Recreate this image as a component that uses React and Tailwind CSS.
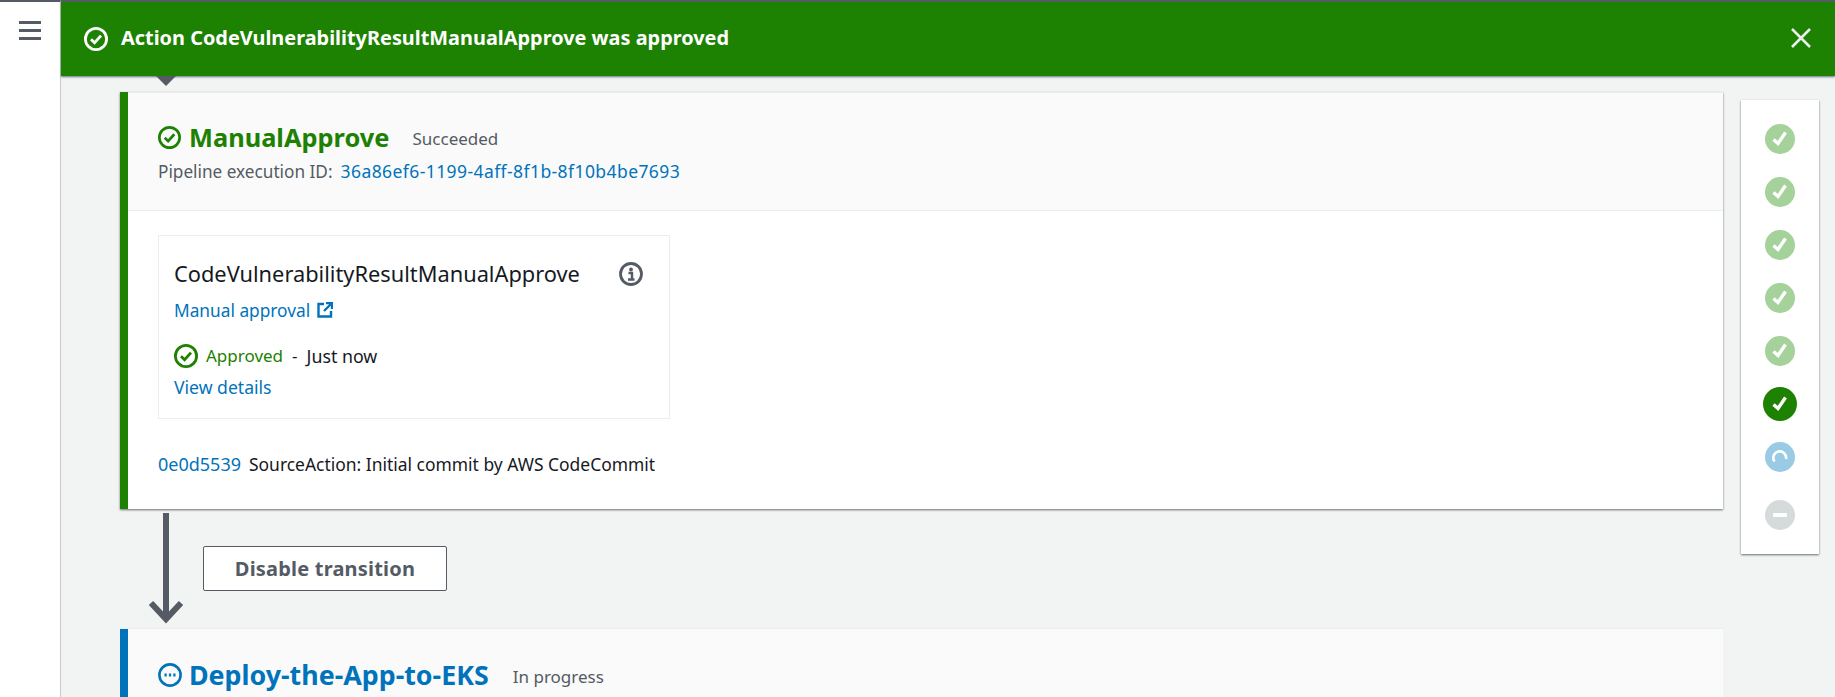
const CheckOutline = ({ size = 24, color = "#1d8102", sw = 2.8 }) => (
  <svg width={size} height={size} viewBox="0 0 24 24" fill="none" stroke={color} strokeWidth={sw} className="shrink-0">
    <circle cx="12" cy="12" r={12 - sw / 2} />
    <path d="M7 12.2l3.6 3.6 6.4-7.2" strokeWidth={sw} />
  </svg>
);

const Step = ({ bg, size = 30, children }) => (
  <div className="flex items-center justify-center rounded-full shrink-0" style={{ background: bg, width: size, height: size }}>
    {children}
  </div>
);

const Tick = () => (
  <svg width="18" height="18" viewBox="0 0 18 18" fill="none" stroke="white" strokeWidth="3.4">
    <path d="M2.5 9.5l4.5 4L14.5 2.5" />
  </svg>
);

const LightStep = () => (
  <Step bg="#a5d19a"><Tick /></Step>
);

export default function App() {
  return (
    <div className="flex h-[697px] w-full overflow-hidden bg-[#f2f3f3] text-[#16191f] font-['Noto_Sans',sans-serif] text-[17px] leading-[24px]">
      <aside className="w-[61px] shrink-0 bg-white border-r border-[#c6cccc] border-t-2 border-t-[#545b64] pt-[19px] pl-[19px]">
        <div className="flex flex-col gap-[5px] w-[22px]">
          <div className="h-[3px] bg-[#545b64]" />
          <div className="h-[3px] bg-[#545b64]" />
          <div className="h-[3px] bg-[#545b64]" />
        </div>
      </aside>
      <div className="flex-1 min-w-0 flex flex-col">
        <div className="h-[76px] shrink-0 bg-[#1d8102] border-t-2 border-t-[#545b64] shadow-[0_1px_2px_#687078] flex items-center pl-[23px] pr-[24px] text-white relative z-10">
          <CheckOutline size={24} color="white" />
          <span className="ml-[13px] text-[19.9px] font-bold relative top-[-1px]">Action CodeVulnerabilityResultManualApprove was approved</span>
          <svg width="20" height="20" viewBox="0 0 20 20" className="ml-auto relative top-[-1px]" stroke="#eaeded" strokeWidth="2.6">
            <path d="M1 1l18 18M19 1L1 19" />
          </svg>
          <div className="absolute left-[95px] top-[74px] w-0 h-0 border-l-[10px] border-r-[10px] border-t-[10px] border-l-transparent border-r-transparent border-t-[#545b64]" />
        </div>
        <div className="flex pt-[16px] pl-[59px] pr-[16px] gap-[18px] items-start">
          <div className="w-[1603px] shrink-0">
            <section className="bg-white border-l-[8px] border-[#1d8102] h-[417px] shadow-[0_1px_2px_#687078]">
              <header className="h-[119px] bg-[#fafafa] border-b border-t border-[#eaeded] pl-[30px] pt-[28px]">
                <div className="flex items-center h-[32px]">
                  <CheckOutline size={23} />
                  <h2 className="ml-[8px] text-[25.4px] font-bold text-[#1d8102]">ManualApprove</h2>
                  <span className="ml-[23px] text-[#545b64] relative top-[2px]">Succeeded</span>
                </div>
                <div className="mt-[6px] text-[#545b64] text-[17.2px]">
                  Pipeline execution ID:
                  <span className="ml-[8px] text-[#0073bb] text-[17.5px] tracking-[0.42px]">36a86ef6-1199-4aff-8f1b-8f10b4be7693</span>
                </div>
              </header>
              <div className="pl-[30px] pt-[24px]">
                <div className="w-[512px] h-[184px] border border-[#eaeded] pl-[15px] pr-[26px] pt-[24px]">
                  <div className="flex items-center justify-between h-[28px]">
                    <span className="text-[21.8px]">CodeVulnerabilityResultManualApprove</span>
                    <svg width="24" height="24" viewBox="0 0 24 24" fill="none">
                      <circle cx="12" cy="12" r="10.5" stroke="#545b64" strokeWidth="2.8" />
                      <circle cx="12" cy="7.5" r="1.9" fill="#545b64" />
                      <path d="M9.5 11h3.5v5.5M9 17.5h6.5" stroke="#545b64" strokeWidth="2.4" />
                    </svg>
                  </div>
                  <div className="flex items-center mt-[11px] text-[#0073bb] text-[17.3px]">
                    Manual approval
                    <svg width="16" height="16" viewBox="0 0 16 16" fill="none" stroke="#0073bb" strokeWidth="2.4" className="ml-[7px] relative top-[-1px]">
                      <path d="M7 2H1.5v12.5H14V9M9 1h6v6M15 1L7 9" />
                    </svg>
                  </div>
                  <div className="flex items-center mt-[21px] h-[24px]">
                    <CheckOutline size={24} />
                    <span className="ml-[8px] text-[#1d8102]">Approved</span>
                    <span className="ml-[9px]">-</span>
                    <span className="ml-[9px] text-[17.8px]">Just now</span>
                  </div>
                  <div className="mt-[7px] text-[#0073bb] text-[17.6px]">View details</div>
                </div>
                <div className="mt-[33px]">
                  <span className="text-[#0073bb] text-[18px]">0e0d5539</span>
                  <span className="ml-[8px] text-[17.45px]">SourceAction: Initial commit by AWS CodeCommit</span>
                </div>
              </div>
            </section>
            <div className="h-[120px] flex">
              <svg width="36" height="116" viewBox="0 0 36 116" fill="none" stroke="#545b64" strokeWidth="6" className="ml-[28px] mt-[4px] shrink-0">
                <path d="M18 0v106M3 90l15 16 15-16" />
              </svg>
              <button className="ml-[19px] mt-[37px] w-[244px] h-[45px] bg-white border border-[#545b64] rounded-[2px] text-[20px] font-bold text-[#545b64] tracking-[0.2px]">
                Disable transition
              </button>
            </div>
            <section className="bg-[#fafafa] border-l-[8px] border-[#0073bb] h-[100px] pl-[30px] pt-[30px] shadow-[0_-1px_0_#eaeded]">
              <div className="flex items-center h-[32px]">
                <svg width="24" height="24" viewBox="0 0 24 24" fill="none" className="shrink-0">
                  <circle cx="12" cy="12" r="10.6" stroke="#0073bb" strokeWidth="2.6" />
                  <path d="M6.5 12h2.2M10.9 12h2.2M15.3 12h2.2" stroke="#0073bb" strokeWidth="2.8" />
                </svg>
                <h2 className="ml-[7px] text-[26.8px] font-bold text-[#0073bb]">Deploy-the-App-to-EKS</h2>
                <span className="ml-[24px] text-[#545b64] relative top-[2px]">In progress</span>
              </div>
            </section>
          </div>
          <nav className="w-[78px] shrink-0 mt-[8px] h-[454px] bg-white shadow-[0_1px_2px_#687078] flex flex-col items-center pt-[24px]">
            <div className="flex flex-col items-center gap-[23px]">
              <LightStep />
              <LightStep />
              <LightStep />
              <LightStep />
              <LightStep />
            </div>
            <div className="mt-[21px]">
              <Step bg="#1d8102" size={34}><Tick /></Step>
            </div>
            <div className="mt-[21px]">
              <Step bg="#99cbe4">
                <svg width="18" height="18" viewBox="0 0 18 18" fill="none" stroke="white" strokeWidth="2.6">
                  <path d="M3.5 13.5A6.4 6.4 0 1 1 15 11" />
                </svg>
              </Step>
            </div>
            <div className="mt-[28px]">
              <Step bg="#d5dbdb">
                <div className="w-[14px] h-[4px] bg-white rounded-[1px]" />
              </Step>
            </div>
          </nav>
        </div>
      </div>
    </div>
  );
}
